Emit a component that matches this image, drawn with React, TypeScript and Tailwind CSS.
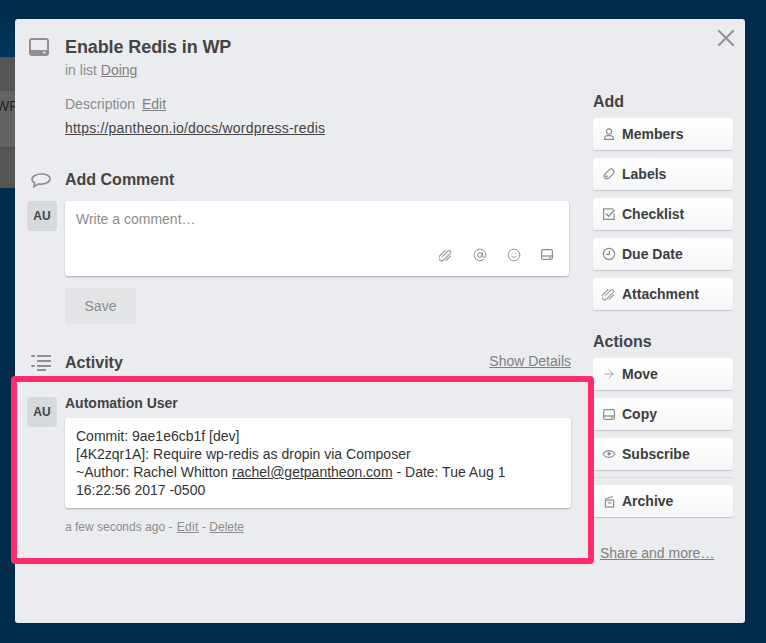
import { ArrowRight, X, AtSign, Smile } from "lucide-react"
import type { ReactNode } from "react"

function CardIcon({ className, outline }: { className: string; outline?: boolean }) {
  return (
    <svg viewBox="0 0 20 18" className={className} fill="none">
      <rect x="1" y="1" width="18" height="16" rx="2" stroke="currentColor" strokeWidth="2" />
      {outline ? (
        <>
          <path d="M1 11.5h18" stroke="currentColor" strokeWidth="2" />
          <rect x="13.5" y="13" width="3" height="2" fill="currentColor" />
        </>
      ) : (
        <>
          <path d="M1 12h18v3a2 2 0 0 1-2 2H3a2 2 0 0 1-2-2z" fill="currentColor" />
          <rect x="14" y="13.6" width="2.4" height="1.6" fill="#ebecef" />
        </>
      )}
    </svg>
  )
}

function ClipIcon({ className }: { className: string }) {
  return (
    <svg viewBox="0 0 14 14" className={className} fill="none" stroke="currentColor" strokeWidth="1">
      <g transform="rotate(45 7 7)">
        <path d="M5.5 11V3a1.7 1.7 0 0 1 3.4 0v9a2.9 2.9 0 0 1-5.8 0V4" />
        <path d="M10.9 4v7" />
      </g>
    </svg>
  )
}

function MemberIcon() {
  return (
    <svg viewBox="0 0 14 14" className="w-[14px] h-[14px]" fill="none" stroke="currentColor" strokeWidth="1.2">
      <circle cx="7" cy="4.4" r="2.6" />
      <path d="M2.6 12.4v-1.2c0-1.4 1-2.2 2.4-2.6h4c1.4.4 2.4 1.2 2.4 2.6v1.2z" />
    </svg>
  )
}

function TagIcon() {
  return (
    <svg viewBox="0 0 14 14" className="w-[14px] h-[14px]" fill="none" stroke="currentColor" strokeWidth="1.2">
      <g transform="rotate(-45 7 7)">
        <rect x="1.2" y="4.2" width="11.6" height="5.6" rx="2.8" />
        <circle cx="3.6" cy="7" r="0.6" />
      </g>
    </svg>
  )
}

function CheckIcon() {
  return (
    <svg viewBox="0 0 14 14" className="w-[14px] h-[14px]" fill="none" stroke="currentColor" strokeWidth="1.2">
      <path d="M12.2 6.5v5.9H1.6V1.8h9.8" />
      <path d="m3.8 6.4 2.8 2.8 6-6.4" strokeWidth="1.4" />
    </svg>
  )
}

function ClockIcon() {
  return (
    <svg viewBox="0 0 14 14" className="w-[14px] h-[14px]" fill="none" stroke="currentColor" strokeWidth="1.2">
      <circle cx="7" cy="7" r="5.6" />
      <path d="M7.4 3.4v4H4.4" />
    </svg>
  )
}

function EyeIcon() {
  return (
    <svg viewBox="0 0 14 14" className="w-[14px] h-[14px]" fill="none" stroke="currentColor" strokeWidth="1.1">
      <path d="M1 7c1.5-2.2 3.6-3.4 6-3.4S11.5 4.8 13 7c-1.5 2.2-3.6 3.4-6 3.4S2.5 9.2 1 7Z" />
      <circle cx="7" cy="6.8" r="1.7" fill="currentColor" stroke="none" />
    </svg>
  )
}

function ArchiveIcon() {
  return (
    <svg viewBox="0 0 12 14" className="w-[11px] h-[13px]" fill="none" stroke="currentColor" strokeWidth="1.3">
      <path d="M1 4.5 9.5 1.5" />
      <rect x="1.5" y="5.5" width="9" height="7.5" />
      <path d="M4 8.5h4" />
    </svg>
  )
}

function SideButton({ icon, label }: { icon: ReactNode; label: string }) {
  return (
    <button className="flex items-center h-8 w-[140px] rounded-[3px] bg-gradient-to-b from-white to-[#f5f6f7] shadow-[0_1px_1px_#c3c6cb] pl-[7px] text-[14px] font-bold text-[#3d3d3d]">
      <span className="w-[18px] flex justify-center text-[#8c8c8c]">{icon}</span>
      <span className="ml-[4px]">{label}</span>
    </button>
  )
}

function Avatar() {
  return (
    <div className="w-[30px] h-[30px] shrink-0 rounded-[3px] bg-[#d6dadc] flex items-center justify-center text-[12px] font-bold text-[#444]">
      AU
    </div>
  )
}

export default function App() {
  return (
    <div className="relative h-[643px] w-[766px] overflow-hidden bg-[#002b4b] pt-[19px] pl-[15px] font-['Liberation_Sans',Arial,sans-serif] text-[#4d4d4d]">
      {/* board behind the modal */}
      <div className="absolute left-0 top-0 w-[15px] h-[57px] bg-gradient-to-b from-[#002b4b] to-[#00365f]" />
      <div className="absolute left-0 top-[57px] w-[15px] h-[131px] bg-[#555654]">
        <div className="mt-[34px] h-[57px] bg-[#636363] border-b border-[#4f4f4f] text-[14px] leading-[30px] text-[#222] whitespace-nowrap overflow-hidden">
          <span className="-ml-[4px] block">WP</span>
        </div>
      </div>

      <div className="relative w-[730px] h-[604px] rounded-[3px] bg-[#ebecef] flex">
        <button className="absolute right-[5px] top-[5px] text-[#969696]">
          <X className="w-[28px] h-[28px]" strokeWidth={2} />
        </button>

        <div className="w-[578px] shrink-0 pl-[12px] pr-[22px] pt-[18px]">
          <div className="flex">
            <div className="w-[38px] shrink-0 pl-[2px] pt-[1px] text-[#8f8f8f]">
              <CardIcon className="w-[20px] h-[18px]" />
            </div>
            <div>
              <h1 className="text-[18px] leading-[20px] font-bold text-[#444] tracking-[-0.1px]">Enable Redis in WP</h1>
              <p className="mt-[3px] text-[14px] leading-[20px] text-[#8c8c8c]">
                in list <span className="underline text-[#808080]">Doing</span>
              </p>
              <p className="mt-[14px] text-[14px] leading-[20px] text-[#8c8c8c]">
                Description <span className="ml-[3px] underline text-[#808080]">Edit</span>
              </p>
              <p className="mt-[4px] text-[14px] leading-[20px] text-[#444] underline tracking-[0.2px]">https://pantheon.io/docs/wordpress-redis</p>
            </div>
          </div>

          <div className="mt-[32px] flex items-center h-[20px]">
            <div className="w-[38px] shrink-0 pl-[4px] text-[#8f8f8f]">
              <svg viewBox="0 0 20 15" className="w-[20px] h-[15px]" fill="none" stroke="currentColor" strokeWidth="1.7">
                <path d="M10.5 1C5.5 1 1 3.2 1 6.3c0 1.7 1.2 2.9 2.6 3.7L3 13.6 7.2 11c1 .1 2.3.2 3.3.1C15.5 10.8 19 8.8 19 5.8 19 2.7 15.5 1 10.5 1Z" />
              </svg>
            </div>
            <h2 className="text-[16px] font-bold text-[#444]">Add Comment</h2>
          </div>

          <div className="mt-[11px] flex">
            <Avatar />
            <div className="ml-[8px] flex-1">
              <div className="h-[75px] mr-[2px] rounded-[3px] bg-white shadow-[0_1px_2px_#a9adb3] px-[11px] pt-[8px]">
                <p className="text-[14px] leading-[20px] text-[#8c8c8c]">Write a comment…</p>
                <div className="mt-[19px] flex justify-end gap-[20px] pr-[4px] text-[#8c8c8c]">
                  <ClipIcon className="w-[14px] h-[14px]" />
                  <AtSign className="w-[14px] h-[14px]" strokeWidth={1.7} />
                  <Smile className="w-[14px] h-[14px]" strokeWidth={1.5} />
                  <CardIcon outline className="w-[12px] h-[11px] mt-[1px] mr-[1px]" />
                </div>
              </div>
              <button className="mt-[12px] w-[71px] h-[36px] rounded-[3px] bg-[#e2e4e6] text-[14px] text-[#8c8c8c]">Save</button>
            </div>
          </div>

          <div className="mt-[29px] flex items-center h-[20px]">
            <div className="w-[38px] shrink-0 pl-[4px] text-[#8f8f8f]">
              <svg viewBox="0 0 20 16" className="w-[20px] h-[16px]" fill="none" stroke="currentColor" strokeWidth="2">
                <path d="M6 1h14M6 6h14M6 11h14M6 15h9" />
                <path d="M1 1h2M1 11h2" strokeLinecap="round" />
              </svg>
            </div>
            <h2 className="text-[16px] font-bold text-[#444]">Activity</h2>
            <span className="ml-auto -mt-[4px] text-[14px] underline text-[#808080]">Show Details</span>
          </div>

          <div className="mt-[24px] flex">
            <Avatar />
            <div className="ml-[8px] flex-1">
              <p className="text-[14px] leading-[16px] font-bold text-[#444] -mt-[2px]">Automation User</p>
              <div className="mt-[7px] rounded-[3px] bg-white shadow-[0_1px_2px_#a9adb3] pl-[11px] pr-[8px] pt-[9px] pb-[9px] text-[14px] leading-[18px] text-[#333]">
                <p>Commit: 9ae1e6cb1f [dev]</p>
                <p>[4K2zqr1A]: Require wp-redis as dropin via Composer</p>
                <p>
                  ~Author: Rachel Whitton <span className="underline">rachel@getpantheon.com</span> - Date: Tue Aug 1 16:22:56 2017 -0500
                </p>
              </div>
              <p className="mt-[11px] text-[12px] leading-[16px] text-[#8c8c8c]">
                a few seconds ago - <span className="ml-[1px] underline tracking-[0.3px]">Edit</span> - <span className="underline">Delete</span>
              </p>
            </div>
          </div>
        </div>

        <div className="pt-[73px] w-[140px]">
          <h3 className="text-[16px] leading-[20px] font-bold text-[#444]">Add</h3>
          <div className="mt-[6px] flex flex-col gap-2">
            <SideButton icon={<MemberIcon />} label="Members" />
            <SideButton icon={<TagIcon />} label="Labels" />
            <SideButton icon={<CheckIcon />} label="Checklist" />
            <SideButton icon={<ClockIcon />} label="Due Date" />
            <SideButton icon={<ClipIcon className="w-[14px] h-[14px]" />} label="Attachment" />
          </div>
          <h3 className="mt-[22px] text-[16px] leading-[20px] font-bold text-[#444]">Actions</h3>
          <div className="mt-[6px] flex flex-col gap-2">
            <SideButton icon={<ArrowRight className="w-[14px] h-[14px]" strokeWidth={1.3} />} label="Move" />
            <SideButton icon={<CardIcon outline className="w-[12px] h-[11px]" />} label="Copy" />
            <SideButton icon={<EyeIcon />} label="Subscribe" />
          </div>
          <div className="mt-[7px] h-px bg-[#d6dadc]" />
          <div className="mt-[7px]">
            <SideButton icon={<ArchiveIcon />} label="Archive" />
          </div>
          <p className="mt-[26px] ml-[7px] text-[14px] leading-[20px] underline text-[#808080]">Share and more…</p>
        </div>

        {/* highlight drawn over the screenshot */}
        <div className="absolute left-[-4px] top-[357px] w-[583px] h-[188px] rounded-[4px] border-[6px] border-[#ff2d6b] pointer-events-none" />
      </div>
    </div>
  )
}
